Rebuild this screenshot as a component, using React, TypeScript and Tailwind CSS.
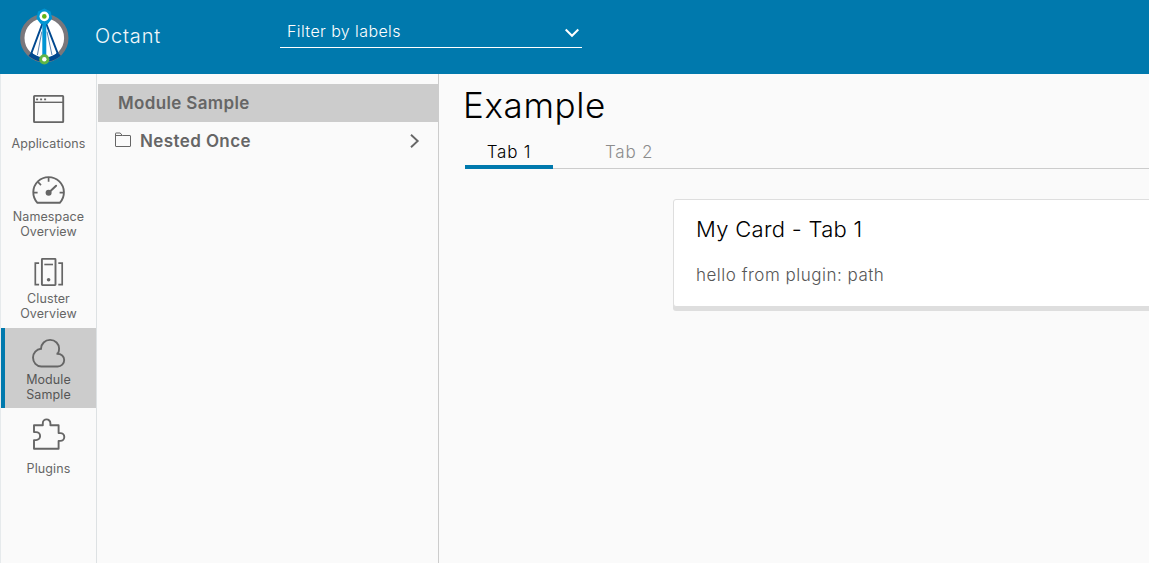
import React from "react";

type IconProps = { children: React.ReactNode };

function NavIcon({ children }: IconProps) {
  return (
    <svg
      width="36"
      height="36"
      viewBox="0.9 0 36 36"
      fill="none"
      stroke="#666"
      strokeWidth="1.9"
      className="block shrink-0"
    >
      {children}
    </svg>
  );
}

const icons = {
  applications: (
    <NavIcon>
      <rect x="3.9" y="4.9" width="29.2" height="26.2" rx="0.6" />
      <path d="M4 11.3h29" strokeWidth="1.4" />
      <path d="M6 8.3h2M10 8.3h2M14 8.3h2" strokeWidth="1.8" />
    </NavIcon>
  ),
  namespace: (
    <NavIcon>
      <path d="M7.3 30.8A15.3 15.3 0 1 1 29.7 30.8Z" strokeLinejoin="round" />
      <path d="M18.5 5.5v4.3M3.5 20.7h4M29.5 20.7h4M8 10.2l2.9 2.9" strokeWidth="1.7" />
      <path d="M18.8 20.5l7.2-6.8" strokeWidth="2" strokeLinecap="round" />
      <circle cx="18.5" cy="20.8" r="3" fill="#666" stroke="none" />
    </NavIcon>
  ),
  cluster: (
    <NavIcon>
      <rect x="11.8" y="4.9" width="13.6" height="26.2" rx="0.5" />
      <path d="M9 9.2H5.2v21.4H9M28.2 9.2h3.9v21.4h-3.9" strokeWidth="1.7" />
      <path d="M14.2 10.5h8.7" strokeWidth="1.6" />
      <circle cx="18.5" cy="25.7" r="1.8" fill="#666" stroke="none" />
    </NavIcon>
  ),
  cloud: (
    <NavIcon>
      <path d="M26.4 18.8C31.4 18.6 34.1 21.3 34.1 25.1C34.1 28.6 31.2 31.5 27.6 31.5H11.2C6.5 31.5 2.9 27.5 2.9 22.6C2.9 18.2 6.4 14.2 10.9 13.8C11 8.8 14.8 4.9 20 4.9C25.2 4.9 29 8.8 29 13.6C29 15.4 28.7 16.8 28 18.4" />
    </NavIcon>
  ),
  plugins: (
    <NavIcon>
      <path
        d="M3.9 9.2H12.7V7.2A3.8 3.8 0 0 1 20.3 7.2V9.2H28.5V17.1H30.3A3.9 3.9 0 0 1 30.3 24.9H28.5V32.8H3.9V24.1H6A3.9 3.9 0 0 0 6 16.1H3.9Z"
        strokeLinejoin="round"
      />
    </NavIcon>
  ),
};

type NavItemProps = {
  icon: React.ReactNode;
  lines: string[];
  active?: boolean;
  className?: string;
};

function NavItem({ icon, lines, active, className = "" }: NavItemProps) {
  return (
    <a
      className={`flex h-20 shrink-0 flex-col items-center pt-[7px] ${
        active ? "border-l-4 border-[#0079ad] bg-[#ccc] pr-1 text-[#565656]" : "text-[#666]"
      } ${className}`}
    >
      {icon}
      <div
        className={`text-center text-[12.5px] leading-[15px] tracking-[0.1px] whitespace-nowrap ${
          lines.length > 1 ? "mt-px" : "mt-[9px]"
        }`}
      >
        {lines.map((line) => (
          <div key={line}>{line}</div>
        ))}
      </div>
    </a>
  );
}

function Logo() {
  return (
    <svg width="50" height="58" viewBox="0 0.4 50 58" className="block shrink-0">
      <circle cx="24.3" cy="30.5" r="22" fill="#fff" stroke="#7a777b" strokeWidth="4.4" />
      <path d="M10 46.4L11.8 47.9A22 22 0 0 0 37.4 47.9L39 46.2" fill="none" stroke="#004990" strokeWidth="4.6" />
      <path d="M22.8 15L11.2 46M25.8 15L37.8 46" stroke="#004990" strokeWidth="1.9" />
      <path d="M21.8 24L17.4 47.5M27 24L32 47.5" stroke="#35679f" strokeWidth="0.8" />
      <path d="M24.3 12V50" stroke="#0095d3" strokeWidth="4" />
      <path d="M24.3 1L30.6 4L32.2 10.8L27.8 16.4H20.8L16.4 10.8L18 4Z" fill="#0095d3" />
      <circle cx="24.3" cy="8.8" r="4.8" fill="#fff" />
      <circle cx="24.3" cy="8.8" r="2.3" fill="#60b515" />
      <circle cx="24.3" cy="51.7" r="5.1" fill="#60b545" />
      <circle cx="24.3" cy="51.7" r="2.2" fill="#fff" />
    </svg>
  );
}

export default function App() {
  return (
    <div className="flex h-[563px] w-full flex-col overflow-hidden bg-[#fafafa] font-['Inter','Open_Sans',sans-serif]">
      <header className="flex h-[74px] shrink-0 bg-[#0079ad] text-white">
        <div className="flex w-[280px] items-center pl-5">
          <Logo />
          <span className="ml-[25px] pb-0.5 text-[20px] leading-6 font-light tracking-[0.8px] text-[#f0f7fa]">
            Octant
          </span>
        </div>
        <div className="mt-4 flex h-8 w-[302px] items-center justify-between border-b border-white pr-[3px] pl-[7px]">
          <span className="-mt-0.5 text-base leading-6 font-light tracking-[0.4px]">Filter by labels</span>
          <svg width="14" height="10" viewBox="0 0 14 10" fill="none" stroke="#fff" strokeWidth="2" className="mt-[2px]">
            <path d="M0.7 1.5L7 7.8L13.3 1.5" />
          </svg>
        </div>
      </header>

      <div className="flex min-h-0 flex-1">
        <nav className="flex w-[97px] shrink-0 flex-col border-x border-r-[#dde1e3] border-l-[#e6eaec] pt-[10px]">
          <NavItem icon={icons.applications} lines={["Applications"]} />
          <NavItem icon={icons.namespace} lines={["Namespace", "Overview"]} className="mt-px" />
          <NavItem icon={icons.cluster} lines={["Cluster", "Overview"]} className="mt-[2px]" />
          <NavItem icon={icons.cloud} lines={["Module", "Sample"]} active className="mt-px" />
          <NavItem icon={icons.plugins} lines={["Plugins"]} className="mt-px" />
        </nav>

        <aside className="flex w-[342px] shrink-0 flex-col border-r border-[#ccc] pt-[10px] pl-px text-[17px] leading-6 font-semibold text-[#666]">
          <div className="flex h-[38px] items-center bg-[#ccc] pl-5 tracking-[0.35px]">Module Sample</div>
          <div className="flex h-[38px] items-center pr-[18px] pl-[17px]">
            <svg width="16" height="16" viewBox="0 0 16 16" fill="none" stroke="#666" className="-mt-0.5 shrink-0">
              <path d="M0.5 1.5Q0.5 1 1 1H5.2L7.3 3.5H15Q15.5 3.5 15.5 4V14Q15.5 14.5 15 14.5H1Q0.5 14.5 0.5 14ZM0.5 3.5H7" />
            </svg>
            <span className="ml-[9px] flex-1 tracking-[0.4px]">Nested Once</span>
            <svg width="11" height="14" viewBox="0 0 11 14" fill="none" stroke="#666" strokeWidth="1.9">
              <path d="M2 0.8L8.7 7L2 13.2" />
            </svg>
          </div>
        </aside>

        <main className="min-w-0 flex-1 pt-[9px] pl-[25px]">
          <h1 className="-ml-px text-[35px] leading-[44px] font-light tracking-[0.6px] text-black">Example</h1>
          <div className="mt-px ml-px flex h-[41px] border-b border-[#ccc]">
            <button className="h-[41px] w-[88px] border-b-4 border-[#0079ad] pt-[10px] text-[17px] leading-6 font-light tracking-[0.8px] text-black">
              Tab 1
            </button>
            <button className="ml-[52px] h-[37px] pt-[10px] text-[17px] leading-6 font-light tracking-[0.8px] text-[#8c8c8c]">
              Tab 2
            </button>
          </div>
          <section className="mt-[30px] ml-[209px] h-[108px] w-[600px] rounded-[3px] border border-[#dedede] bg-white pt-[14px] pl-[22px] shadow-[0_4px_0_0_#dedede]">
            <h2 className="text-[22px] leading-[30px] font-light tracking-[0.3px] text-black">My Card - Tab 1</h2>
            <p className="mt-[19px] text-[17px] leading-6 font-light tracking-[0.5px] text-[#565656]">hello from plugin: path</p>
          </section>
        </main>
      </div>
    </div>
  );
}
